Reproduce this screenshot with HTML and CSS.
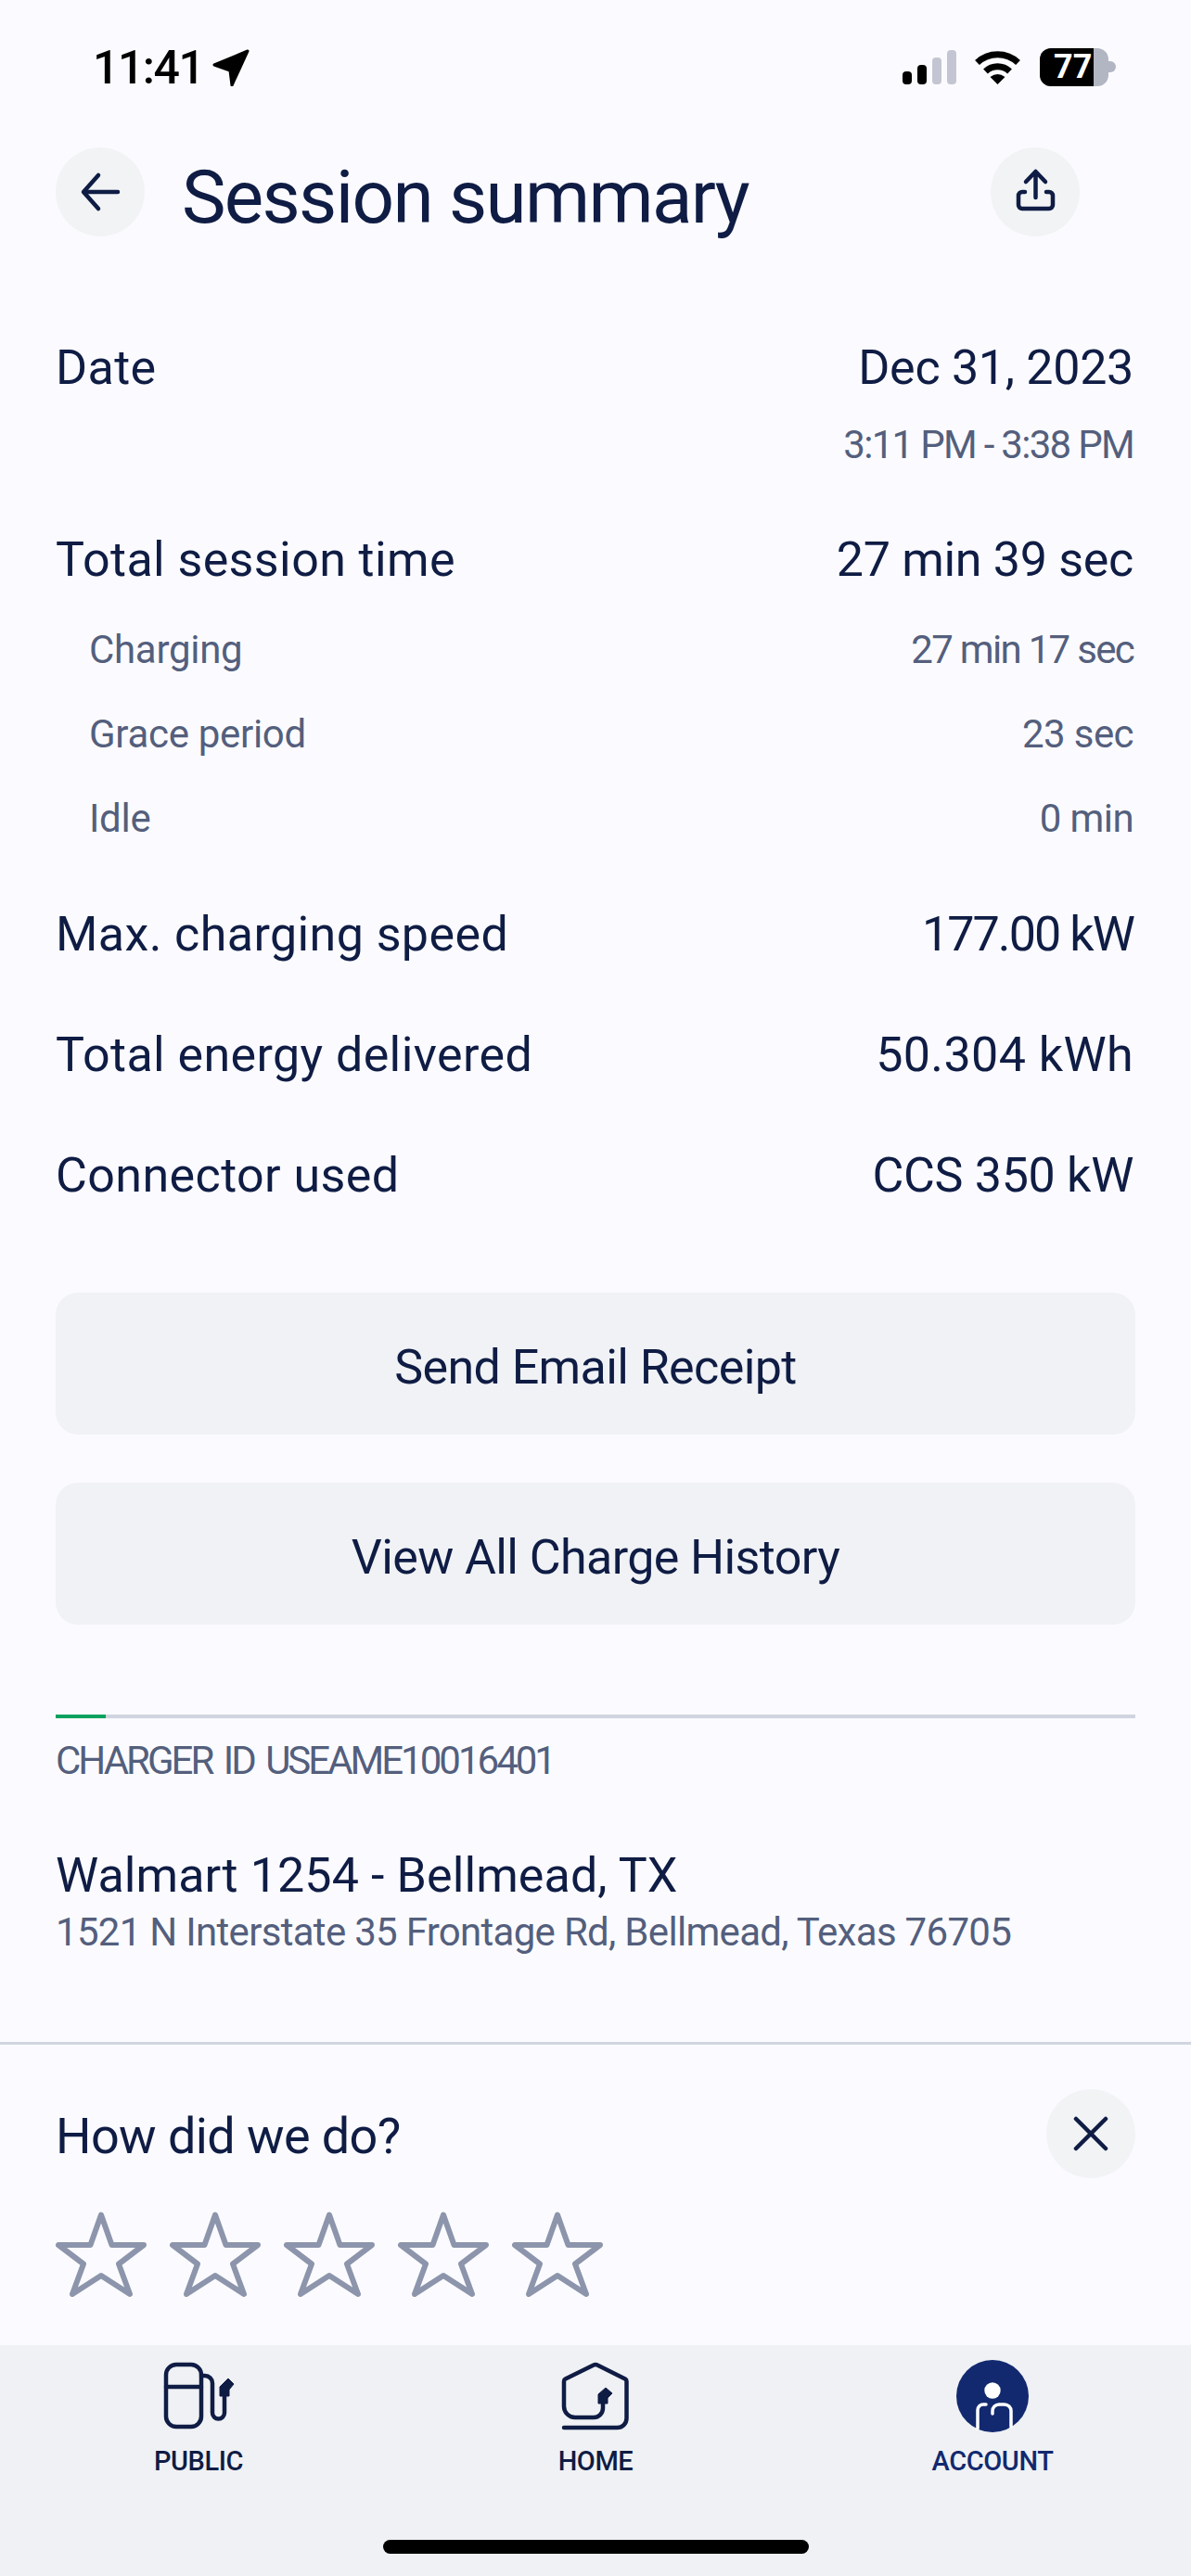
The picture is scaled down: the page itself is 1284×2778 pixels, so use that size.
FILE: index.html
```html
<!DOCTYPE html>
<html lang="en">
<head>
<meta charset="utf-8">
<title>Session summary</title>
<link rel="stylesheet" href="styles.css">
</head>
<body>
<div class="screen">
  <div class="status">
    <div class="status-left">
      <span class="clock">11:41</span>
      <svg class="loc" width="40" height="40" viewBox="0 0 40 40"><path d="M38 2 2 17l17 6 2 16z" fill="#000" stroke="#000" stroke-width="3" stroke-linejoin="round"/></svg>
    </div>
    <div class="status-right">
      <div class="signal"><i class="bar b1"></i><i class="bar b2"></i><i class="bar b3 off"></i><i class="bar b4 off"></i></div>
      <svg class="wifi" width="51" height="38" viewBox="0 0 51 38"><path d="M3.5 14.500A32 32 0 0 1 47.500 14.500" fill="none" stroke="#000" stroke-width="7"/><path d="M12.500 24A19 19 0 0 1 38.500 24" fill="none" stroke="#000" stroke-width="7"/><path d="M25.500 38 17.500 30Q25.500 24 33.500 30z" fill="#000"/></svg>
      <div class="battery"><div class="battery-fill"><span class="battery-num">77</span></div></div>
      <i class="battery-tip"></i>
    </div>
  </div>

  <header class="head">
    <button class="round" aria-label="Back"><svg width="96" height="96" viewBox="0 0 96 96"><path d="M67 48H31M46 30 30 48l16 18" class="ico"/></svg></button>
    <h1 class="title">Session summary</h1>
    <button class="round share" aria-label="Share"><svg width="96" height="96" viewBox="0 0 96 96"><path d="M48.500 27V54M38 37 48.500 26 59 37M37 48H34a4 4 0 0 0-4 4V62a4 4 0 0 0 4 4H63a4 4 0 0 0 4-4V52a4 4 0 0 0-4-4H60" class="ico"/></svg></button>
  </header>

  <main class="summary">
    <div class="row"><span>Date</span><span class="val">Dec 31, 2023</span></div>
    <div class="row sub time"><span></span><span class="num tight">3:11 PM - 3:38 PM</span></div>
    <div class="row total"><span>Total session time</span><span class="val">27 min 39 sec</span></div>
    <div class="row sub first"><span>Charging</span><span class="num tight">27 min 17 sec</span></div>
    <div class="row sub"><span>Grace period</span><span class="num">23 sec</span></div>
    <div class="row sub"><span>Idle</span><span class="num">0 min</span></div>
    <div class="row spaced"><span>Max. charging speed</span><span class="val narrow">177.00 kW</span></div>
    <div class="row spaced"><span>Total energy delivered</span><span>50.304 kWh</span></div>
    <div class="row spaced last"><span>Connector used</span><span class="val">CCS 350 kW</span></div>

    <button class="action first-action">Send Email Receipt</button>
    <button class="action">View All Charge History</button>

    <div class="progress"><i class="progress-on"></i></div>
    <div class="charger">CHARGER ID USEAME10016401</div>
    <div class="site">Walmart 1254 - Bellmead, TX</div>
    <div class="address">1521 N Interstate 35 Frontage Rd, Bellmead, Texas 76705</div>
  </main>

  <section class="rating">
    <div class="rating-top">
      <div class="ask">How did we do?</div>
      <button class="round" aria-label="Close"><svg width="96" height="96" viewBox="0 0 96 96"><path d="M32 32 64 64M64 32 32 64" class="ico"/></svg></button>
    </div>
    <div class="stars">
      <svg class="star" viewBox="0 0 98 92"><path d="M49 3.500 60.500 36H95L68 56.500 80 89 49 69 18 89 30 56.500 3 36H37.500z"/></svg>
      <svg class="star" viewBox="0 0 98 92"><path d="M49 3.500 60.500 36H95L68 56.500 80 89 49 69 18 89 30 56.500 3 36H37.500z"/></svg>
      <svg class="star" viewBox="0 0 98 92"><path d="M49 3.500 60.500 36H95L68 56.500 80 89 49 69 18 89 30 56.500 3 36H37.500z"/></svg>
      <svg class="star" viewBox="0 0 98 92"><path d="M49 3.500 60.500 36H95L68 56.500 80 89 49 69 18 89 30 56.500 3 36H37.500z"/></svg>
      <svg class="star" viewBox="0 0 98 92"><path d="M49 3.500 60.500 36H95L68 56.500 80 89 49 69 18 89 30 56.500 3 36H37.500z"/></svg>
    </div>
  </section>

  <nav class="nav">
    <div class="tab">
      <svg width="78" height="78" viewBox="0 0 78 78"><g transform="translate(2 3)"><rect x="2" y="2" width="38" height="67" rx="11" class="ln"/><path d="M2 26H40M40 14H44a8 8 0 0 1 8 8V54a6.500 6.500 0 0 0 13 0V34" class="ln"/><path d="M60 36V26L69 17 75 23 70 29V36z" fill="#0f1c44" stroke="#0f1c44" stroke-linejoin="round"/></g></svg>
      <span class="tab-label">PUBLIC</span>
    </div>
    <div class="tab">
      <svg width="78" height="78" viewBox="0 0 78 78"><g transform="translate(3 3)"><path d="M44 44V49a10 10 0 0 1-10 10H14A12 12 0 0 1 2 47V20a3 3 0 0 1 1.500-2.500L34 2.500a4 4 0 0 1 4 0L68 17.500a3 3 0 0 1 1.500 2.500V60a10 10 0 0 1-10 10H2" class="ln"/><path d="M39 44V34L47 27 54 33 49 38V44z" fill="#0f1c44" stroke="#0f1c44" stroke-linejoin="round"/></g></svg>
      <span class="tab-label">HOME</span>
    </div>
    <div class="tab active">
      <svg width="78" height="78" viewBox="0 0 78 78"><circle cx="39" cy="39" r="39" fill="#12296f"/><circle cx="39" cy="33" r="8.700" fill="#fff"/><path d="M23 74V54a6 6 0 0 1 6-6H32M39 58V55a7 7 0 0 1 7-7H52a7 7 0 0 1 7 7V72" fill="none" stroke="#fff" stroke-width="3.500" stroke-linecap="round"/></svg>
      <span class="tab-label">ACCOUNT</span>
    </div>
    <i class="home-bar"></i>
  </nav>
</div>
</body>
</html>
```
FILE: styles.css
```css
* { box-sizing: border-box; }
html, body { margin: 0; padding: 0; }
body { background: #fbfbff; font-family: Roboto, "Liberation Sans", sans-serif; color: #0f1c44; }
.screen { width: 1284px; height: 2778px; display: flex; flex-direction: column; overflow: hidden; background: #fbfbff; }

.status { height: 159px; padding: 52px 81px 0 100px; display: flex; justify-content: space-between; align-items: flex-start; }
.status-left { display: flex; align-items: center; gap: 10px; height: 42px; }
.clock { font-size: 50px; font-weight: 500; color: #000; line-height: 42px; letter-spacing: -1.500px; }
.loc { display: block; }
.status-right { display: flex; align-items: flex-start; }
.signal { display: flex; align-items: flex-end; gap: 6px; height: 39px; margin-right: 19px; }
.bar { display: block; width: 10px; background: #000; border-radius: 4px; }
.bar.off { background: #c3c6d2; }
.b1 { height: 14px; }
.b2 { height: 21px; }
.b3 { height: 29px; }
.b4 { height: 37px; }
.wifi { display: block; margin-top: 1px; margin-right: 20px; }
.battery { width: 74px; height: 41px; border-radius: 12px; background: #b2b5c2; overflow: hidden; }
.battery-fill { width: 58px; height: 41px; background: #000; padding-left: 15px; }
.battery-num { display: block; color: #fff; font-size: 36px; line-height: 41px; font-weight: 700; white-space: nowrap; }
.battery-tip { display: block; width: 8px; height: 12px; margin-top: 14px; background: #b2b5c2; border-radius: 0 6px 6px 0; }

.head { height: 96px; padding-left: 60px; padding-right: 120px; display: flex; align-items: center; }
.round { width: 96px; height: 96px; border: 0; padding: 0; border-radius: 50%; background: #f1f3f5; flex: none; display: block; }
.round svg { display: block; }
.ico { fill: none; stroke: #0f1c44; stroke-width: 4.500; stroke-linecap: round; stroke-linejoin: round; }
.title { margin: 0 0 0 40px; padding-top: 6px; font-size: 80px; font-weight: 400; line-height: 96px; height: 96px; flex: 1; letter-spacing: -1.700px; }
.share { margin-left: auto; }

.summary { padding: 112px 62px 0 60px; display: flex; flex-direction: column; }
.row { display: flex; justify-content: space-between; font-size: 52px; line-height: 60px; letter-spacing: 0.400px; }
.row .val { letter-spacing: -0.300px; }
.row .val.narrow { letter-spacing: -1.900px; }
.row.sub { font-size: 42px; line-height: 50px; color: #545f7d; padding-left: 36px; letter-spacing: -0.300px; }
.row.sub .num { letter-spacing: -0.600px; }
.row.sub .num.tight { letter-spacing: -1.700px; }
.row.time { margin-top: 28px; padding-left: 0; }
.row.total { margin-top: 69px; }
.row.sub.first { margin-top: 42px; }
.row.sub + .row.sub { margin-top: 41px; }
.row.sub.time + .row.total { margin-top: 69px; }
.row.spaced { margin-top: 70px; }

.action { display: block; width: 1164px; height: 153px; margin-top: 52px; border: 0; padding: 7px 0 0; border-radius: 24px; background: #f0f2f5; color: #0f1c44; font-family: inherit; font-size: 52px; letter-spacing: -0.600px; }
.first-action { margin-top: 96px; }

.progress { width: 1164px; height: 4px; margin-top: 97px; background: #d0d5e0; }
.progress-on { display: block; width: 54px; height: 4px; background: #0ba15f; }
.charger { margin-top: 21px; font-size: 42px; line-height: 50px; color: #545f7d; letter-spacing: -3px; word-spacing: 5px; }
.site { margin-top: 69px; font-size: 52px; line-height: 60px; letter-spacing: 0.100px; }
.address { margin-top: 6px; font-size: 42px; line-height: 50px; color: #545f7d; letter-spacing: -0.700px; }

.rating { margin-top: auto; height: 327px; border-top: 3px solid #d0d5e0; padding: 48px 60px 0; }
.rating-top { display: flex; justify-content: space-between; align-items: center; }
.ask { font-size: 54px; line-height: 60px; letter-spacing: -0.600px; padding-top: 6px; }
.stars { display: flex; gap: 25px; margin-top: 36px; }
.star { display: block; width: 98px; height: 92px; fill: none; stroke: #8c95ab; stroke-width: 6; stroke-linejoin: round; }

.nav { position: relative; height: 249px; background: #eff1f4; display: grid; grid-template-columns: repeat(3, 428px); padding-top: 16px; }
.tab { display: flex; flex-direction: column; align-items: center; }
.tab svg { display: block; }
.ln { fill: none; stroke: #0f1c44; stroke-width: 4.500; stroke-linecap: round; stroke-linejoin: round; }
.tab-label { margin-top: 16px; font-size: 29px; line-height: 30px; font-weight: 500; letter-spacing: -0.400px; }
.active .tab-label { color: #12296f; }
.home-bar { position: absolute; left: 413px; top: 210px; width: 459px; height: 15px; background: #000; border-radius: 8px; }
```
